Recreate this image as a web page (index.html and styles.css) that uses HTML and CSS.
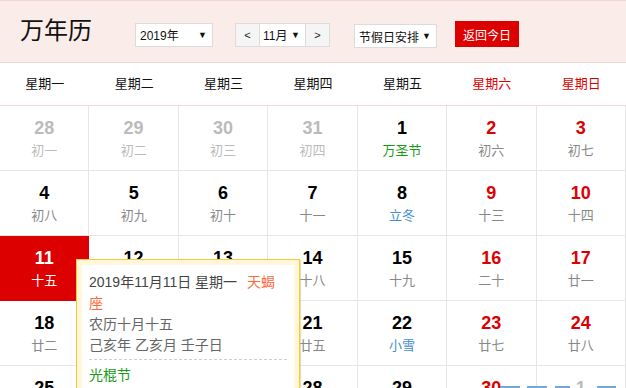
FILE: index.html
```html
<!DOCTYPE html>
<html lang="zh-CN">
<head>
<meta charset="utf-8">
<title>万年历</title>
<link rel="stylesheet" href="styles.css">
</head>
<body>
<div class="cal">
  <div class="hd">
    <h1 class="title">万年历</h1>
    <div class="sel sel-year"><span>2019年</span><i class="arr">▼</i></div>
    <div class="month">
      <span class="nav">&lt;</span>
      <div class="mon"><span>11月</span><i class="arr">▼</i></div>
      <span class="nav">&gt;</span>
    </div>
    <div class="sel sel-hol"><span>节假日安排</span><i class="arr">▼</i></div>
    <a class="today">返回今日</a>
  </div>
  <div class="week">
    <div>星期一</div><div>星期二</div><div>星期三</div><div>星期四</div><div>星期五</div><div class="we">星期六</div><div class="we">星期日</div>
  </div>
  <div class="grid">
    <div class="cell off"><div class="num">28</div><div class="lu">初一</div></div>
    <div class="cell off"><div class="num">29</div><div class="lu">初二</div></div>
    <div class="cell off"><div class="num">30</div><div class="lu">初三</div></div>
    <div class="cell off"><div class="num">31</div><div class="lu">初四</div></div>
    <div class="cell"><div class="num">1</div><div class="lu fest">万圣节</div></div>
    <div class="cell we"><div class="num">2</div><div class="lu">初六</div></div>
    <div class="cell we"><div class="num">3</div><div class="lu">初七</div></div>

    <div class="cell"><div class="num">4</div><div class="lu">初八</div></div>
    <div class="cell"><div class="num">5</div><div class="lu">初九</div></div>
    <div class="cell"><div class="num">6</div><div class="lu">初十</div></div>
    <div class="cell"><div class="num">7</div><div class="lu">十一</div></div>
    <div class="cell"><div class="num">8</div><div class="lu term">立冬</div></div>
    <div class="cell we"><div class="num">9</div><div class="lu">十三</div></div>
    <div class="cell we"><div class="num">10</div><div class="lu">十四</div></div>

    <div class="cell cur"><div class="num">11</div><div class="lu">十五</div></div>
    <div class="cell"><div class="num">12</div><div class="lu">十六</div></div>
    <div class="cell"><div class="num">13</div><div class="lu">十七</div></div>
    <div class="cell"><div class="num">14</div><div class="lu">十八</div></div>
    <div class="cell"><div class="num">15</div><div class="lu">十九</div></div>
    <div class="cell we"><div class="num">16</div><div class="lu">二十</div></div>
    <div class="cell we"><div class="num">17</div><div class="lu">廿一</div></div>

    <div class="cell"><div class="num">18</div><div class="lu">廿二</div></div>
    <div class="cell"><div class="num">19</div><div class="lu">廿三</div></div>
    <div class="cell"><div class="num">20</div><div class="lu">廿四</div></div>
    <div class="cell"><div class="num">21</div><div class="lu">廿五</div></div>
    <div class="cell"><div class="num">22</div><div class="lu term">小雪</div></div>
    <div class="cell we"><div class="num">23</div><div class="lu">廿七</div></div>
    <div class="cell we"><div class="num">24</div><div class="lu">廿八</div></div>

    <div class="cell"><div class="num">25</div><div class="lu">廿九</div></div>
    <div class="cell"><div class="num">26</div><div class="lu">三十</div></div>
    <div class="cell"><div class="num">27</div><div class="lu">初一</div></div>
    <div class="cell"><div class="num">28</div><div class="lu">初二</div></div>
    <div class="cell"><div class="num">29</div><div class="lu">初三</div></div>
    <div class="cell we"><div class="num">30</div><div class="lu">初四</div></div>
    <div class="cell off"><div class="num">1</div><div class="lu">初五</div></div>
  </div>

  <div class="tip">
    <div class="t1">2019年11月11日 星期一<span class="xz">天蝎座</span></div>
    <div class="info">
      <div>农历十月十五</div>
      <div>己亥年 乙亥月 壬子日</div>
    </div>
    <div class="fest-line">光棍节</div>
  </div>

  <div class="bars"><span class="b1"></span><span class="b2"></span><span class="b3"></span><span class="b4"></span></div>
</div>
</body>
</html>
```

FILE: styles.css
```css
html, body {
  margin: 0;
  padding: 0;
  background: #fff;
  overflow: hidden;
}
body {
  font-family: "Liberation Sans", "Noto Sans CJK SC", sans-serif;
  color: #111;
}
.cal {
  position: relative;
  width: 626px;
}

/* header */
.hd {
  display: flex;
  align-items: center;
  height: 55px;
  padding: 6px 0 0 20px;
  background: #f9ece9;
  border-top: 1px solid #f1d6d2;
  border-bottom: 1px solid #f1d6d2;
}
.title {
  margin: 0 0 7px;
  width: 72px;
  font-size: 24px;
  line-height: 30px;
  font-weight: normal;
  color: #111;
}
.sel {
  box-sizing: border-box;
  display: flex;
  align-items: center;
  justify-content: space-between;
  height: 24px;
  padding: 0 5px 0 4px;
  border: 1px solid #dcdcdc;
  background: #fff;
  font-size: 12px;
  color: #111;
}
.arr {
  font-style: normal;
  font-size: 9px;
  color: #111;
}
.sel-year {
  width: 78px;
  margin-left: 43px;
}
.month {
  display: flex;
  height: 24px;
  box-sizing: border-box;
  margin-left: 22px;
  border: 1px solid #dcdcdc;
  background: #fff;
}
.nav {
  width: 23px;
  display: flex;
  align-items: center;
  justify-content: center;
  background: #f5f5f5;
  font-size: 11px;
  color: #222;
}
.month .nav:first-child { border-right: 1px solid #dcdcdc; }
.month .nav:last-child { border-left: 1px solid #dcdcdc; }
.mon {
  width: 45px;
  box-sizing: border-box;
  display: flex;
  align-items: center;
  justify-content: space-between;
  padding: 0 5px 0 3px;
  font-size: 12px;
}
.sel-hol {
  width: 83px;
  margin-left: 24px;
  margin-top: 3px;
}
.today {
  display: flex;
  align-items: center;
  justify-content: center;
  width: 64px;
  height: 26px;
  margin-left: 18px;
  margin-bottom: 1px;
  background: #dd0000;
  color: #fff;
  font-size: 12px;
}

/* weekdays */
.week {
  display: grid;
  grid-template-columns: repeat(7, 1fr);
  height: 42px;
  border-bottom: 1px solid #f1d9d5;
}
.week div {
  text-align: center;
  line-height: 42px;
  font-size: 13px;
  color: #111;
}
.week .we { color: #dd0000; }

/* day grid */
.grid {
  display: grid;
  grid-template-columns: repeat(7, 1fr);
}
.cell {
  box-sizing: border-box;
  height: 65px;
  padding-top: 12px;
  border-right: 1px solid #e6e6e6;
  border-bottom: 1px solid #e6e6e6;
  text-align: center;
}
.num {
  font-size: 18px;
  line-height: 20px;
  font-weight: bold;
  color: #000;
}
.lu {
  margin-top: 4px;
  font-size: 13px;
  line-height: 18px;
  color: #888;
}
.cell.we .num { color: #dd0000; }
.cell.off .num { color: #bbb; }
.cell.off .lu { color: #bbb; }
.lu.fest { color: #179b17; }
.lu.term { color: #3d8fd1; }
.cell.cur {
  background: #dd0000;
  border-color: #dd0000;
}
.cell.cur .num, .cell.cur .lu { color: #fff; }

/* tooltip */
.tip {
  position: absolute;
  left: 76px;
  top: 259px;
  width: 198px;
  padding: 12px;
  background: #fff;
  border: 1px solid #f5c640;
  box-shadow: inset 0 0 0 5px #fff7d9, 1px 1px 1px rgba(200, 160, 40, 0.35);
  font-size: 14px;
  line-height: 21px;
  color: #444;
  z-index: 2;
}
.xz {
  margin-left: 10px;
  color: #ff6a3a;
}
.info {
  color: #666;
  padding-bottom: 3px;
  border-bottom: 1px dashed #cfcfcf;
}
.fest-line {
  padding-top: 5px;
  color: #179b17;
}

/* bottom strip */
.bars {
  position: absolute;
  left: 500px;
  top: 386px;
  display: flex;
}
.bars span {
  display: block;
  height: 2px;
  background: #6fa8dc;
}
.bars .b1 { width: 20px; }
.bars .b2 { width: 20px; margin-left: 7px; }
.bars .b3 { width: 15px; margin-left: 8px; }
.bars .b4 { width: 19px; margin-left: 27px; }
```
